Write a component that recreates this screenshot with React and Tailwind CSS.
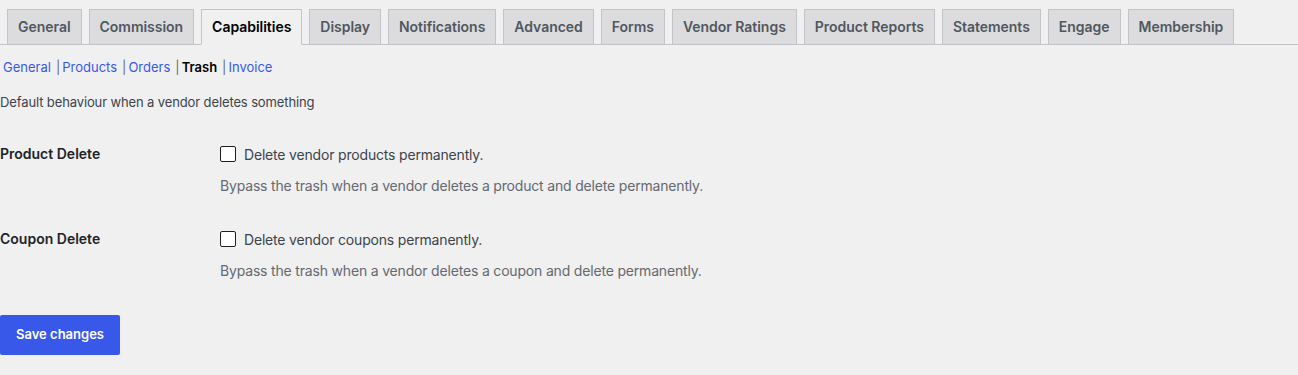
const tabs = ['General', 'Commission', 'Capabilities', 'Display', 'Notifications', 'Advanced', 'Forms', 'Vendor Ratings', 'Product Reports', 'Statements', 'Engage', 'Membership'];
const subnav = ['General', 'Products', 'Orders', 'Trash', 'Invoice'];

const rows = [
  { title: 'Product Delete', label: 'Delete vendor products permanently.', desc: 'Bypass the trash when a vendor deletes a product and delete permanently.' },
  { title: 'Coupon Delete', label: 'Delete vendor coupons permanently.', desc: 'Bypass the trash when a vendor deletes a coupon and delete permanently.' },
];

export default function App() {
  return (
    <div className="min-h-[375px] bg-[#f0f0f1] text-[#3c434a] font-['Inter','Liberation_Sans',sans-serif] text-[13px]">
      {/* tabs */}
      <div className="flex pt-[9px] border-b border-[#c3c4c7]">
        {tabs.map((t) => {
          const active = t === 'Capabilities';
          return (
            <div
              key={t}
              className={
                'ml-[7px] -mb-px px-[10px] py-[5px] border text-[14px] leading-[24px] font-semibold tracking-[-0.03px] ' +
                (active
                  ? 'bg-[#f0f0f1] text-black border-[#c3c4c7] border-b-[#f0f0f1]'
                  : 'bg-[#dcdcde] text-[#50575e] border-[#c3c4c7]')
              }
            >
              {t}
            </div>
          );
        })}
      </div>

      {/* sub nav */}
      <div className="flex items-center pl-[3px] mt-[13px] h-[20px]">
        {subnav.map((s, i) => (
          <span key={s} className="flex items-center">
            {i > 0 && <span className="text-[#646970] ml-[5px] mr-[2px]">|</span>}
            {s === 'Trash' ? (
              <span className="font-semibold text-black">{s}</span>
            ) : (
              <span className="text-[#3858e9]">{s}</span>
            )}
          </span>
        ))}
      </div>

      <p className="mt-[14px] leading-[20px] tracking-[-0.12px]">Default behaviour when a vendor deletes something</p>

      <div className="mt-[16px]">
        {rows.map((r) => (
          <div key={r.title} className="flex">
            <div className="w-[220px] shrink-0 pt-[16px] pr-[10px] text-[14px] leading-[20px] font-semibold text-[#1d2327]">
              {r.title}
            </div>
            <div className="pt-[15px] pb-[17px] text-[14px] tracking-[-0.18px]">
              <label className="flex items-center gap-[8px] h-[20px] mt-[1px]">
                <span className="w-[16px] h-[16px] border border-[#1e1e1e] rounded-[2px] bg-white" />
                <span className="text-[#3c434a]">{r.label}</span>
              </label>
              <p className="mt-[12px] text-[#646970] leading-[20px]">{r.desc}</p>
            </div>
          </div>
        ))}
      </div>

      <div className="pt-[17px] pb-[20px]">
        <button className="h-[40px] px-[16px] bg-[#3858e9] text-white text-[13px] font-semibold rounded-[2px]">
          Save changes
        </button>
      </div>
    </div>
  );
}
